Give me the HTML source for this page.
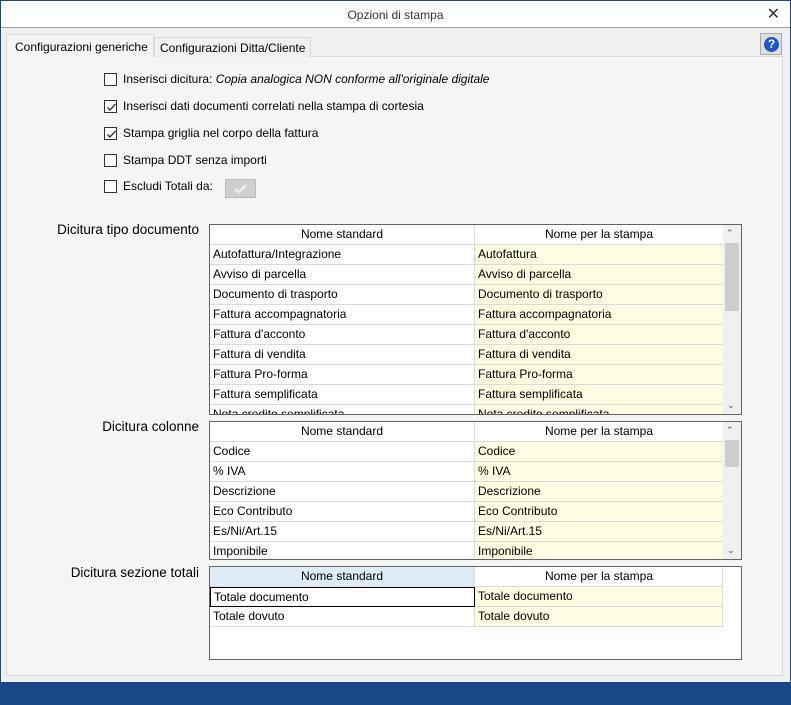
<!DOCTYPE html>
<html><head><meta charset="utf-8"><style>
*{box-sizing:border-box;margin:0;padding:0}
body{width:791px;height:705px;overflow:hidden;background:#1a4786;font-family:"Liberation Sans",sans-serif;font-size:12px;color:#000;position:relative}
.a{position:absolute}
.win{left:1px;top:1px;width:789px;height:681px;background:#f0f0f0}
.title{left:0;top:0;width:789px;height:27px;background:#fff;border-bottom:1px solid #a0a0a0;text-align:center;line-height:28px;font-size:12px;color:#333}
.cb{width:13px;height:13px;border:1px solid #333;background:#fff}
.cb svg{position:absolute;left:1px;top:1px}
.lbl{font-size:12px}
.tbl{background:#fff;border:1px solid #646464;overflow:hidden}
.row{position:absolute;left:0;width:513px;height:20px;border-bottom:1px solid #dadada;white-space:nowrap}
.c1{position:absolute;left:0;top:0;width:265px;height:19px;padding-left:3px;line-height:18px;border-right:1px solid #dadada;background:#fff}
.c2{position:absolute;left:265px;top:0;width:248px;height:19px;padding-left:3px;line-height:18px;background:#fefde2}
.hd .c1,.hd .c2{background:#fff;text-align:center;padding:0;line-height:19px}
.sb{position:absolute;right:0;top:0;width:18px;bottom:0;background:#f0f0f0}
.sec{font-size:13.5px;text-align:right;width:192px;left:7px}
</style></head><body>
<div class="a win">
<div class="a title">Opzioni di stampa<span class="a" style="right:10px;top:0;font-size:16px;color:#333">✕</span></div>
<div class="a" style="left:5px;top:55px;width:777px;height:620px;background:#f5f5f5;border:1px solid #d9d9d9"></div>
<div class="a" style="left:5px;top:33px;width:148px;height:23px;background:#f5f5f5;border:1px solid #d9d9d9;border-bottom:none;padding:5px 0 0 8px">Configurazioni generiche</div>
<div class="a" style="left:153px;top:36px;width:157px;height:20px;background:#f0f0f0;border:1px solid #d9d9d9;border-bottom:none;padding:3px 0 0 5px">Configurazioni Ditta/Cliente</div>
<div class="a" style="left:759px;top:32px;width:22px;height:22px;background:#ddd;border:1px solid #aaa">
<div class="a" style="left:3px;top:3px;width:15px;height:15px;border-radius:50%;background:#1f54c8;color:#fff;font-weight:bold;font-size:12px;text-align:center;line-height:15px">?</div></div>
</div>
<div class="a cb" style="left:104px;top:73px"></div>
<div class="a lbl" style="left:123px;top:72px">Inserisci dicitura: <i>Copia analogica NON conforme all'originale digitale</i></div>
<div class="a cb" style="left:104px;top:100px"><svg width="11" height="11"><path d="M1.5 5.5L4 8L9.5 2" stroke="#333" stroke-width="1.3" fill="none"/></svg></div>
<div class="a lbl" style="left:123px;top:99px">Inserisci dati documenti correlati nella stampa di cortesia</div>
<div class="a cb" style="left:104px;top:127px"><svg width="11" height="11"><path d="M1.5 5.5L4 8L9.5 2" stroke="#333" stroke-width="1.3" fill="none"/></svg></div>
<div class="a lbl" style="left:123px;top:126px">Stampa griglia nel corpo della fattura</div>
<div class="a cb" style="left:104px;top:154px"></div>
<div class="a lbl" style="left:123px;top:153px">Stampa DDT senza importi</div>
<div class="a cb" style="left:104px;top:180px"></div>
<div class="a lbl" style="left:123px;top:179px">Escludi Totali da:</div>
<div class="a" style="left:225px;top:179px;width:31px;height:19px;background:#cfcfcf;border:1px solid #bbb"><svg width="29" height="17"><path d="M9 9L13 12L20 5" stroke="#eee" stroke-width="2.5" fill="none"/></svg></div>

<div class="a sec" style="top:222px">Dicitura tipo documento</div>
<div class="a sec" style="top:419px">Dicitura colonne</div>
<div class="a sec" style="top:565px">Dicitura sezione totali</div>

<div class="a tbl" style="left:209px;top:224px;width:533px;height:191px">
<div class="row hd" style="top:0"><div class="c1">Nome standard</div><div class="c2">Nome per la stampa</div></div>
<div class="row" style="top:20px"><div class="c1">Autofattura/Integrazione</div><div class="c2">Autofattura</div></div>
<div class="row" style="top:40px"><div class="c1">Avviso di parcella</div><div class="c2">Avviso di parcella</div></div>
<div class="row" style="top:60px"><div class="c1">Documento di trasporto</div><div class="c2">Documento di trasporto</div></div>
<div class="row" style="top:80px"><div class="c1">Fattura accompagnatoria</div><div class="c2">Fattura accompagnatoria</div></div>
<div class="row" style="top:100px"><div class="c1">Fattura d'acconto</div><div class="c2">Fattura d'acconto</div></div>
<div class="row" style="top:120px"><div class="c1">Fattura di vendita</div><div class="c2">Fattura di vendita</div></div>
<div class="row" style="top:140px"><div class="c1">Fattura Pro-forma</div><div class="c2">Fattura Pro-forma</div></div>
<div class="row" style="top:160px"><div class="c1">Fattura semplificata</div><div class="c2">Fattura semplificata</div></div>
<div class="row" style="top:180px"><div class="c1">Nota credito semplificata</div><div class="c2">Nota credito semplificata</div></div>
<div class="sb"><div class="a" style="left:3px;top:3px;font-size:9px;color:#555">&#8963;</div><div class="a" style="left:2px;top:18px;width:14px;height:68px;background:#cdcdcd"></div><div class="a" style="left:4px;bottom:3px;font-size:9px;color:#555">&#8964;</div></div>
</div>

<div class="a tbl" style="left:209px;top:421px;width:533px;height:139px">
<div class="row hd" style="top:0"><div class="c1">Nome standard</div><div class="c2">Nome per la stampa</div></div>
<div class="row" style="top:20px"><div class="c1">Codice</div><div class="c2">Codice</div></div>
<div class="row" style="top:40px"><div class="c1">% IVA</div><div class="c2">% IVA</div></div>
<div class="row" style="top:60px"><div class="c1">Descrizione</div><div class="c2">Descrizione</div></div>
<div class="row" style="top:80px"><div class="c1">Eco Contributo</div><div class="c2">Eco Contributo</div></div>
<div class="row" style="top:100px"><div class="c1">Es/Ni/Art.15</div><div class="c2">Es/Ni/Art.15</div></div>
<div class="row" style="top:120px"><div class="c1">Imponibile</div><div class="c2">Imponibile</div></div>
<div class="sb"><div class="a" style="left:3px;top:3px;font-size:9px;color:#555">&#8963;</div><div class="a" style="left:2px;top:18px;width:14px;height:27px;background:#cdcdcd"></div><div class="a" style="left:4px;bottom:3px;font-size:9px;color:#555">&#8964;</div></div>
</div>

<div class="a tbl" style="left:209px;top:566px;width:533px;height:94px">
<div class="row hd" style="top:0"><div class="c1" style="background:#dcecf7">Nome standard</div><div class="c2">Nome per la stampa</div></div>
<div class="row" style="top:20px"><div class="c1" style="border:1px solid #000;height:20px">Totale documento</div><div class="c2">Totale documento</div></div>
<div class="row" style="top:40px"><div class="c1">Totale dovuto</div><div class="c2">Totale dovuto</div></div>
<div class="a" style="left:512px;top:0;width:1px;height:60px;background:#dadada"></div>
</div>
</body></html>
